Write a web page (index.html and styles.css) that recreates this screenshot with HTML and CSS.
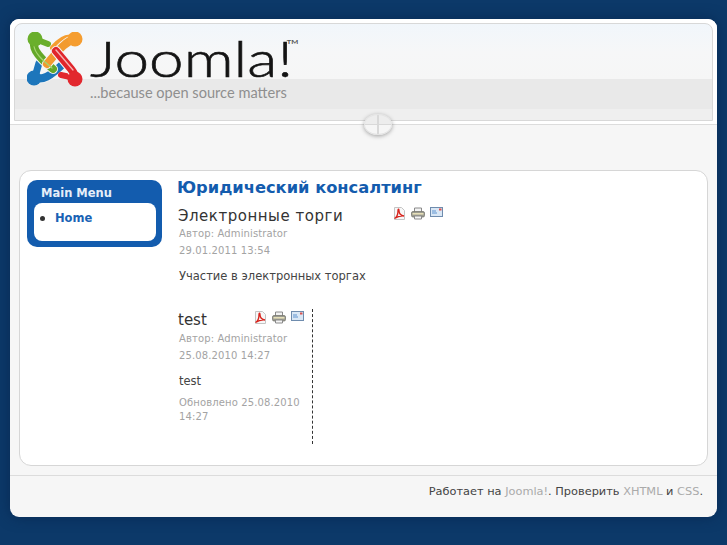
FILE: index.html
```html
<!DOCTYPE html>
<html lang="ru">
<head>
<meta charset="utf-8">
<title>Юридический консалтинг</title>
<link rel="stylesheet" href="styles.css">
</head>
<body>
<svg class="defs" width="0" height="0" aria-hidden="true">
  <symbol id="pdf" viewBox="0 0 13 13">
    <path d="M1.500.5h7l3 3v9h-10z" fill="#f7f7f7" stroke="#c4c4c4"/>
    <path d="M1.500 11.500c2-1 3.500-4 3.500-8 0-2 1-1.500 1 0 0 3 2 5 5 5.500-3-.5-6.500.5-9.500 2.500z" fill="none" stroke="#d8231c" stroke-width="1.300"/>
  </symbol>
  <symbol id="print" viewBox="0 0 14 13">
    <path d="M3.500 5V1h7v4" fill="#f3f3f3" stroke="#8a8a8a"/>
    <rect x=".5" y="4.500" width="13" height="5.500" rx="1.500" fill="#9b9b90" stroke="#77776e" stroke-width=".8"/>
    <rect x="1.500" y="6" width="11" height="1.600" fill="#e6dfb8"/>
    <path d="M3.500 9v3h7V9z" fill="#f5f5f5" stroke="#8a8a8a"/>
  </symbol>
  <symbol id="mail" viewBox="0 0 13 10">
    <rect x=".5" y=".5" width="12" height="9" fill="#d9e7f5" stroke="#6f8cae"/>
    <path d="M2 4h4M2 6h5" stroke="#5f93cf"/>
    <rect x="9" y="1.500" width="2.500" height="2" fill="#d9534f"/>
  </symbol>
</svg>
<div class="page">
  <header class="top">
    <div class="banner">
      <a class="logo" href="#">
        <svg class="mark" viewBox="0 0 56 56" width="56" height="56" aria-hidden="true">
          <g fill="none" stroke-linecap="round">
            <path d="M8 45 L12 31" stroke="#1d76bb" stroke-width="7"/>
            <path d="M7 45 C15 49 23 45 38 30" stroke="#f5f5f5" stroke-width="10"/>
            <path d="M7 45 C15 49 23 45 38 30" stroke="#1d76bb" stroke-width="8"/>
            <path d="M8 7 L21 12" stroke="#6aaf2c" stroke-width="6"/>
            <path d="M48 7 C41 3 33 8 26 16" stroke="#f59d30" stroke-width="6"/>
            <path d="M9 7 C4 14 8 22 26 37" stroke="#f5f5f5" stroke-width="10"/>
            <path d="M9 7 C4 14 8 22 26 37" stroke="#64a828" stroke-width="8"/>
            <path d="M48 7 C40 9 34 15 20 32" stroke="#f5f5f5" stroke-width="10"/>
            <path d="M48 7 C40 9 34 15 20 32" stroke="#f29a2e" stroke-width="8"/>
            <path d="M48 46 L34 43" stroke="#e2282e" stroke-width="6"/>
            <path d="M29 19 L44 37 C48 42 48 44 48 46" stroke="#f5f5f5" stroke-width="10"/>
            <path d="M29 19 L44 37 C48 42 48 44 48 46" stroke="#e0262c" stroke-width="8"/>
            <path d="M29 18 L46 38" stroke="#f4b5b5" stroke-width="1.300"/>
            <path d="M7 14 C8 21 14 27 25 36" stroke="#a5d46e" stroke-width="1.200"/>
          </g>
          <circle cx="8" cy="7" r="7.500" fill="#6aaf2c"/>
          <circle cx="48" cy="7" r="7.500" fill="#f59d30"/>
          <circle cx="7" cy="46" r="7.500" fill="#1d76bb"/>
          <circle cx="48" cy="47" r="7.500" fill="#e2282e"/>
        </svg>
        <span class="wordmark">
          <span class="brand">Joomla!<sup class="tm">TM</sup></span>
          <span class="slogan">...because open source matters</span>
        </span>
      </a>
    </div>
    <span class="knob"></span>
  </header>

  <main class="frame">
    <nav class="menu">
      <h3 class="menu-title">Main Menu</h3>
      <ul class="menu-list">
        <li><a href="#">Home</a></li>
      </ul>
    </nav>
    <section class="content">
      <h1 class="category">Юридический консалтинг</h1>
      <article class="lead">
        <div class="head-row wide">
          <h2 class="item-title spaced">Электронные торги</h2>
          <span class="tools">
            <svg class="ic ic-pdf"><use href="#pdf"/></svg>
            <svg class="ic ic-print"><use href="#print"/></svg>
            <svg class="ic ic-mail"><use href="#mail"/></svg>
          </span>
        </div>
        <p class="meta">Автор: Administrator</p>
        <p class="meta">29.01.2011 13:54</p>
        <p class="body">Участие в электронных торгах</p>
      </article>
      <article class="col">
        <div class="head-row">
          <h2 class="item-title">test</h2>
          <span class="tools">
            <svg class="ic ic-pdf"><use href="#pdf"/></svg>
            <svg class="ic ic-print"><use href="#print"/></svg>
            <svg class="ic ic-mail"><use href="#mail"/></svg>
          </span>
        </div>
        <p class="meta">Автор: Administrator</p>
        <p class="meta">25.08.2010 14:27</p>
        <p class="body">test</p>
        <p class="meta tight">Обновлено 25.08.2010 14:27</p>
      </article>
    </section>
  </main>

  <footer class="foot">
    Работает на <a href="#">Joomla!</a>. Проверить <a href="#">XHTML</a> и <a href="#">CSS</a>.
  </footer>
</div>
</body>
</html>
```
FILE: styles.css
```css
* { box-sizing: border-box; }
html, body { height: 100%; }
body {
  margin: 0;
  padding: 19px 10px 0;
  background: #0c3969;
  font-family: "DejaVu Sans", sans-serif;
  font-size: 11.5px;
  color: #333;
  overflow: hidden;
}
a { text-decoration: none; }
h1, h2, h3, p, ul { margin: 0; padding: 0; }
.defs { position: absolute; }

.page {
  width: 707px;
  height: 498px;
  background: #f6f6f6;
  border-radius: 9px;
  box-shadow: 0 0 14px rgba(5, 30, 65, .55);
  display: flex;
  flex-direction: column;
}

.top {
  position: relative;
  height: 106px;
  flex: none;
  background: #fff;
  border-radius: 9px 9px 0 0;
  padding: 4px 4px 0;
  border-bottom: 1px solid #dcdcdc;
}
.banner {
  height: 98px;
  border: 1px solid #d8d8d8;
  border-radius: 8px 8px 0 0;
  padding: 8px 0 0 12px;
  background: linear-gradient(#f1f6fb 0, #f6f7f8 28px, #f6f6f6 55px, #e9e9e9 55px, #e9e9e9 85px, #efefef 85px, #efefef 100%);
}
.logo { display: flex; align-items: flex-start; }
.mark { flex: none; }
.wordmark { display: flex; flex-direction: column; margin: 0 0 0 7px; }
.brand {
  font-family: "Lato", sans-serif;
  font-weight: 300;
  font-size: 50px;
  line-height: 52px;
  height: 53px;
  color: #141414;
  white-space: nowrap;
  -webkit-text-stroke: .6px #141414;
  transform: scaleX(1.24);
  transform-origin: 0 0;
}
.tm {
  font-size: 6px;
  line-height: 6px;
  font-weight: 700;
  vertical-align: top;
  -webkit-text-stroke: 0;
  color: #555;
  position: relative;
  top: 7px;
  left: -5px;
}
.slogan {
  font-family: "Lato", sans-serif;
  font-size: 14.6px;
  line-height: 16px;
  color: #8f8f8f;
  white-space: nowrap;
}
.knob {
  position: absolute;
  left: 354px;
  top: 95px;
  width: 28px;
  height: 21px;
  border-radius: 50%;
  background:
    linear-gradient(90deg, transparent 48%, #d9d9d9 48%, #d9d9d9 52%, transparent 52%),
    linear-gradient(#ededed 0, #ededed 47%, #d9d9d9 47%, #d9d9d9 53%, #f6f6f6 53%);
  border: 1px solid #e4e4e4;
  box-shadow: 0 1px 4px rgba(0, 0, 0, .35);
}

.frame {
  flex: 1;
  margin: 45px 9px 9px;
  background: #fff;
  border: 1px solid #d6d6d6;
  border-radius: 12px;
  padding: 9px 7px 0;
  display: flex;
  align-items: flex-start;
  gap: 15px;
}
.menu {
  flex: none;
  width: 135px;
  height: 67px;
  background: #135cae;
  border-radius: 10px;
  padding: 0 6px 0 7px;
}
.menu-title {
  font-size: 11.5px;
  font-weight: 700;
  color: #e6eef8;
  line-height: 23px;
  padding: 2px 0 0 7px;
  height: 23px;
}
.menu-list {
  height: 38px;
  background: #fff;
  border-radius: 8px;
  list-style: none;
  padding: 7px 0 0 6px;
  line-height: 16px;
}
.menu-list li { display: flex; align-items: center; gap: 10px; }
.menu-list li::before {
  content: "";
  width: 5px;
  height: 5px;
  border-radius: 50%;
  background: #333;
}
.menu-list a { color: #1a62b4; font-weight: 700; font-size: 11.5px; }

.content { flex: 1; min-width: 0; margin-top: -1px; }
.category {
  font-size: 16.3px;
  line-height: 18px;
  font-weight: 700;
  color: #135cae;
}
.lead { padding: 8px 0 0 1px; }
.head-row { display: flex; align-items: flex-start; margin-bottom: -2px; }
.wide { width: 265px; justify-content: space-between; }
.item-title {
  font-size: 15px;
  line-height: 22px;
  font-weight: 400;
  color: #333;
  white-space: nowrap;
}
.spaced { letter-spacing: .52px; }
.tools { display: flex; gap: 5px; margin-top: 2px; }
.ic { display: block; }
.ic-pdf { width: 13px; height: 13px; }
.ic-print { width: 14px; height: 13px; }
.ic-mail { width: 13px; height: 10px; }
.meta {
  font-size: 10px;
  line-height: 17px;
  color: #a3a3a3;
  padding-left: 1px;
  letter-spacing: .13px;
}
.body {
  font-size: 11.5px;
  line-height: 17px;
  color: #444;
  padding-left: 1px;
  margin-top: 9px;
}
.col {
  width: 136px;
  height: 135px;
  margin-top: 24px;
  padding: 0 6px 0 1px;
  border-right: 1px dashed #333;
}
.col .head-row { justify-content: space-between; width: 126px; margin-bottom: -1px; }
.col .body { margin: 9px 0 6px; }
.tight { line-height: 14px; }

.foot {
  flex: none;
  border-top: 1px solid #dcdcdc;
  height: 42px;
  padding: 7px 14px 0 0;
  text-align: right;
  font-size: 11.35px;
  line-height: 17px;
  color: #444;
}
.foot a { color: #aaa; }
```
